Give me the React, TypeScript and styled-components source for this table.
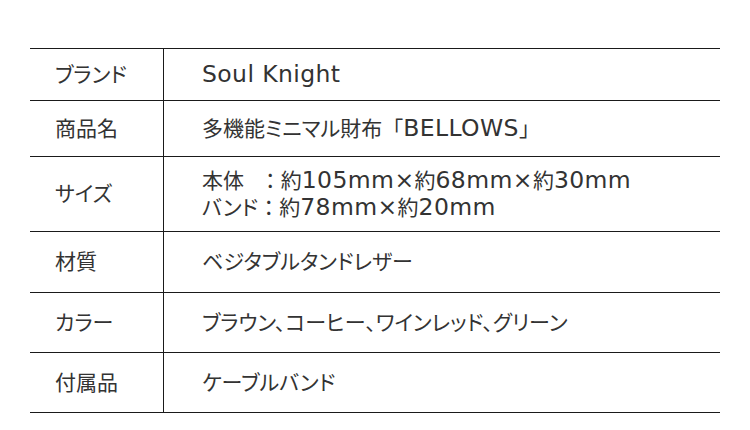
import React from 'react'
import styled, { createGlobalStyle } from 'styled-components'

const GlobalStyle = createGlobalStyle`
  html, body {
    margin: 0;
    padding: 0;
    background: #fff;
  }
  body {
    font-family: "DejaVu Sans", "Noto Sans CJK JP", sans-serif;
    color: #333;
  }
`

const Page = styled.div`
  padding: 48px 30px 0 30px;
`

const Table = styled.div`
  width: 690px;
  border-top: 1px solid #1a1a1a;
`

const Row = styled.div<{ h: number }>`
  display: grid;
  grid-template-columns: 134px 1fr;
  min-height: ${(p) => p.h - 1}px;
  border-bottom: 1px solid #1a1a1a;
`

const Label = styled.div`
  display: flex;
  align-items: center;
  padding-left: 25px;
  border-right: 1px solid #1a1a1a;
  font-size: 21px;
  line-height: 26px;
  white-space: pre;
`

const Value = styled.div`
  display: flex;
  flex-direction: column;
  justify-content: center;
  padding-left: 38px;
  font-size: 21px;
  line-height: 26px;
  white-space: pre;
`

// katakana and the comma set narrower, like the original UI font
const Kana = styled.span`
  font-feature-settings: "palt";
`

// latin / digits run a touch larger than the kanji
const Latin = styled.span`
  font-size: 23.5px;
  letter-spacing: 0.4px;
`

const KANA = /^[ァ-ヶー、]+$/
const LATIN = /^[\x20-\x7E×]+$/

const Rich: React.FC<{ text: string }> = ({ text }) => {
  const parts = text.split(/([ァ-ヶー、]+|[\x20-\x7E×]+)/).filter(Boolean)
  return (
    <span>
      {parts.map((p, i) =>
        KANA.test(p) ? (
          <Kana key={i}>{p}</Kana>
        ) : LATIN.test(p) ? (
          <Latin key={i}>{p}</Latin>
        ) : (
          <React.Fragment key={i}>{p}</React.Fragment>
        )
      )}
    </span>
  )
}

const specs: { label: string; lines: string[]; h: number }[] = [
  { label: 'ブランド', lines: ['Soul Knight'], h: 52 },
  { label: '商品名', lines: ['多機能ミニマル財布「BELLOWS」'], h: 56 },
  {
    label: 'サイズ',
    lines: ['本体  ：約105mm×約68mm×約30mm', 'バンド：約78mm×約20mm'],
    h: 75,
  },
  { label: '材質', lines: ['ベジタブルタンドレザー'], h: 61 },
  { label: 'カラー', lines: ['ブラウン、コーヒー、ワインレッド、グリーン'], h: 60 },
  { label: '付属品', lines: ['ケーブルバンド'], h: 60 },
]

export default function App() {
  return (
    <>
      <GlobalStyle />
      <Page>
        <Table>
          {specs.map((s) => (
            <Row key={s.label} h={s.h}>
              <Label>
                <Rich text={s.label} />
              </Label>
              <Value>
                {s.lines.map((l) => (
                  <Rich key={l} text={l} />
                ))}
              </Value>
            </Row>
          ))}
        </Table>
      </Page>
    </>
  )
}
